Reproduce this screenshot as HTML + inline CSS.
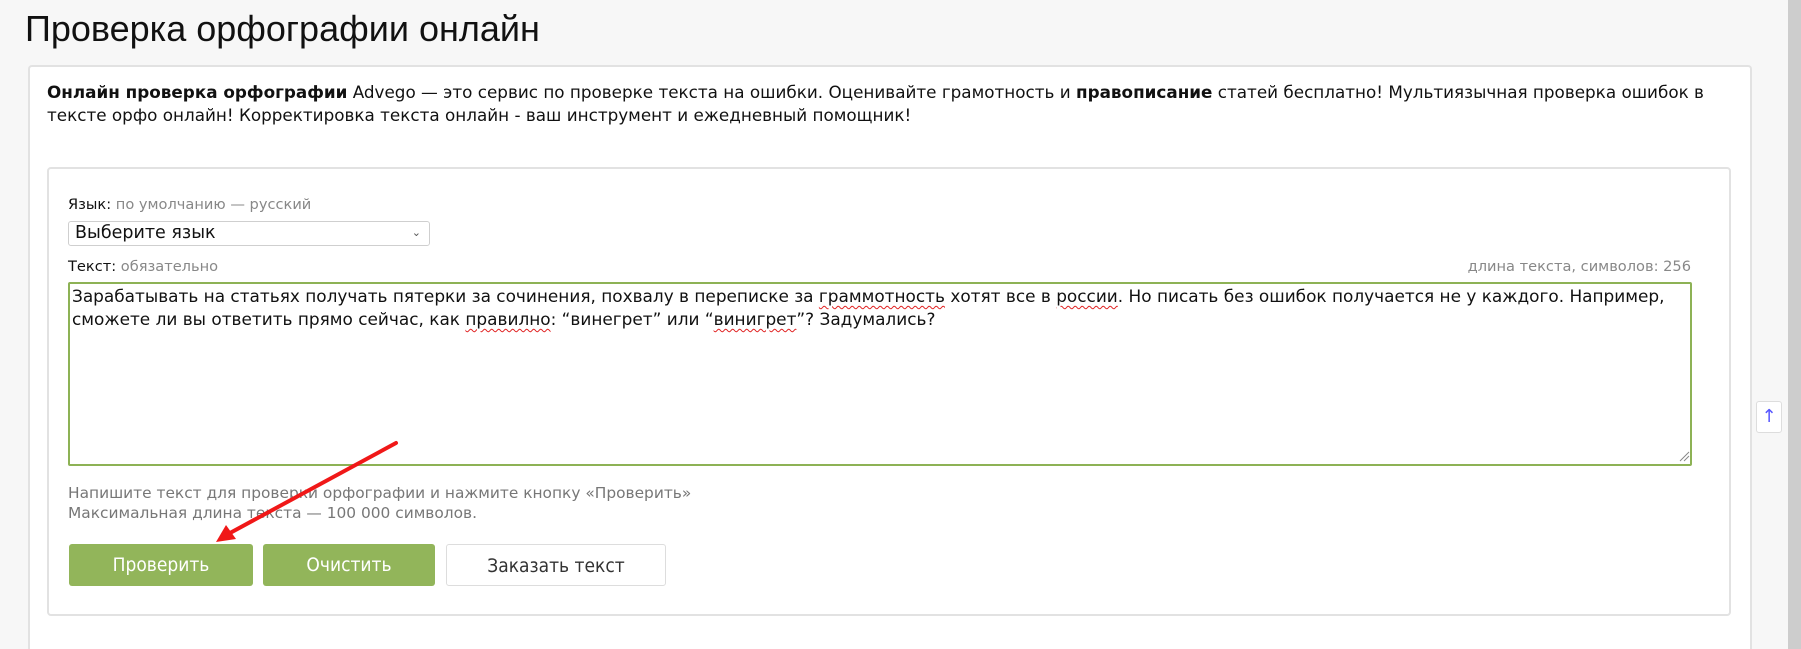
<!DOCTYPE html>
<html><head><meta charset="utf-8"><style>
html,body{margin:0;padding:0;overflow:hidden;}
html{height:649px;}
body{width:1801px;height:649px;background:#f7f7f7;position:relative;overflow:hidden;font-family:"DejaVu Sans","Liberation Sans",sans-serif;color:#111;}
.abs{position:absolute;white-space:nowrap;}
h1{position:absolute;left:25px;top:8px;margin:0;font-family:"Liberation Sans",sans-serif;font-weight:normal;font-size:36px;color:#111;}
.outer{position:absolute;left:28px;top:65px;width:1720px;height:600px;background:#fff;border:2px solid #e2e2e2;border-bottom:none;border-radius:4px 4px 0 0;}
.inner{position:absolute;left:47px;top:167px;width:1680px;height:445px;background:#fff;border:2px solid #e2e2e2;border-radius:4px;}
.intro{left:47px;font-size:16.8px;}
b{font-weight:bold;}
.lbl{font-size:14.6px;}
.gray{color:#888;}
.sel{position:absolute;left:68px;top:221px;width:354px;height:23px;border:1px solid #cfcfcf;border-radius:3px;background:#fff;font-size:17.5px;line-height:23px;padding-left:6px;box-sizing:content-box;}
.ta{position:absolute;left:68px;top:282px;width:1620px;height:180px;border:2px solid #8db255;border-radius:2px;background:#fff;}
.tt{left:72px;font-size:16.9px;}
.err{text-decoration:underline wavy #e02020;text-decoration-thickness:1px;text-underline-offset:3px;}
.hint{left:68px;font-size:15.4px;color:#777;}
.btn{position:absolute;top:544px;height:42px;border-radius:3px;font-size:19px;line-height:42px;text-align:center;font-family:"DejaVu Sans Condensed","DejaVu Sans",sans-serif;}
.g{background:#92b55a;color:#fff;}
.w{background:#fff;border:1px solid #ddd;color:#333;box-sizing:border-box;}
</style></head><body>
<h1>Проверка орфографии онлайн</h1>
<div class="outer"></div>
<div class="abs intro" style="top:82px;"><b>Онлайн проверка орфографии</b> Advego — это сервис по проверке текста на ошибки. Оценивайте грамотность и <b>правописание</b> статей бесплатно! Мультиязычная проверка ошибок в</div>
<div class="abs intro" style="top:105px;">тексте орфо онлайн! Корректировка текста онлайн - ваш инструмент и ежедневный помощник!</div>
<div class="inner"></div>
<div class="abs lbl" style="left:68px;top:196px;">Язык: <span class="gray">по умолчанию — русский</span></div>
<div class="sel">Выберите язык<span style="position:absolute;right:8px;top:-1px;font-size:11px;color:#555;">⌄</span></div>
<div class="abs lbl" style="left:68px;top:258px;">Текст: <span class="gray">обязательно</span></div>
<div class="abs lbl gray" style="right:110px;top:258px;">длина текста, символов: 256</div>
<div class="ta"></div>
<svg class="abs" style="left:1678px;top:450px" width="12" height="12"><path d="M2 11L11 2M6 11L11 6" stroke="#888" stroke-width="1"/></svg>
<div class="abs tt" style="top:286px;">Зарабатывать на статьях получать пятерки за сочинения, похвалу в переписке за <span class="err">граммотность</span> хотят все в <span class="err">россии</span>. Но писать без ошибок получается не у каждого. Например,</div>
<div class="abs tt" style="top:309px;">сможете ли вы ответить прямо сейчас, как <span class="err">правилно</span>: “винегрет” или “<span class="err">винигрет</span>”? Задумались?</div>
<div class="abs hint" style="top:484px;">Напишите текст для проверки орфографии и нажмите кнопку «Проверить»</div>
<div class="abs hint" style="top:504px;">Максимальная длина текста — 100 000 символов.</div>
<div class="btn g" style="left:69px;width:184px;">Проверить</div>
<div class="btn g" style="left:263px;width:172px;">Очистить</div>
<div class="btn w" style="left:446px;width:220px;">Заказать текст</div>
<div class="abs" style="left:1756px;top:401px;width:26px;height:32px;border:1px solid #ddd;border-radius:3px;background:#fff;color:#55f;font-size:18px;text-align:center;line-height:30px;box-sizing:border-box;">↑</div>
<div class="abs" style="left:1788px;top:0;width:13px;height:649px;background:#cdcdcd;"></div>
<svg class="abs" style="left:0;top:0" width="1801" height="649"><line x1="396" y1="443" x2="230" y2="533" stroke="#f01818" stroke-width="4" stroke-linecap="round"/><polygon points="216,542 226,525 236,539" fill="#f01818"/></svg>
</body></html>
